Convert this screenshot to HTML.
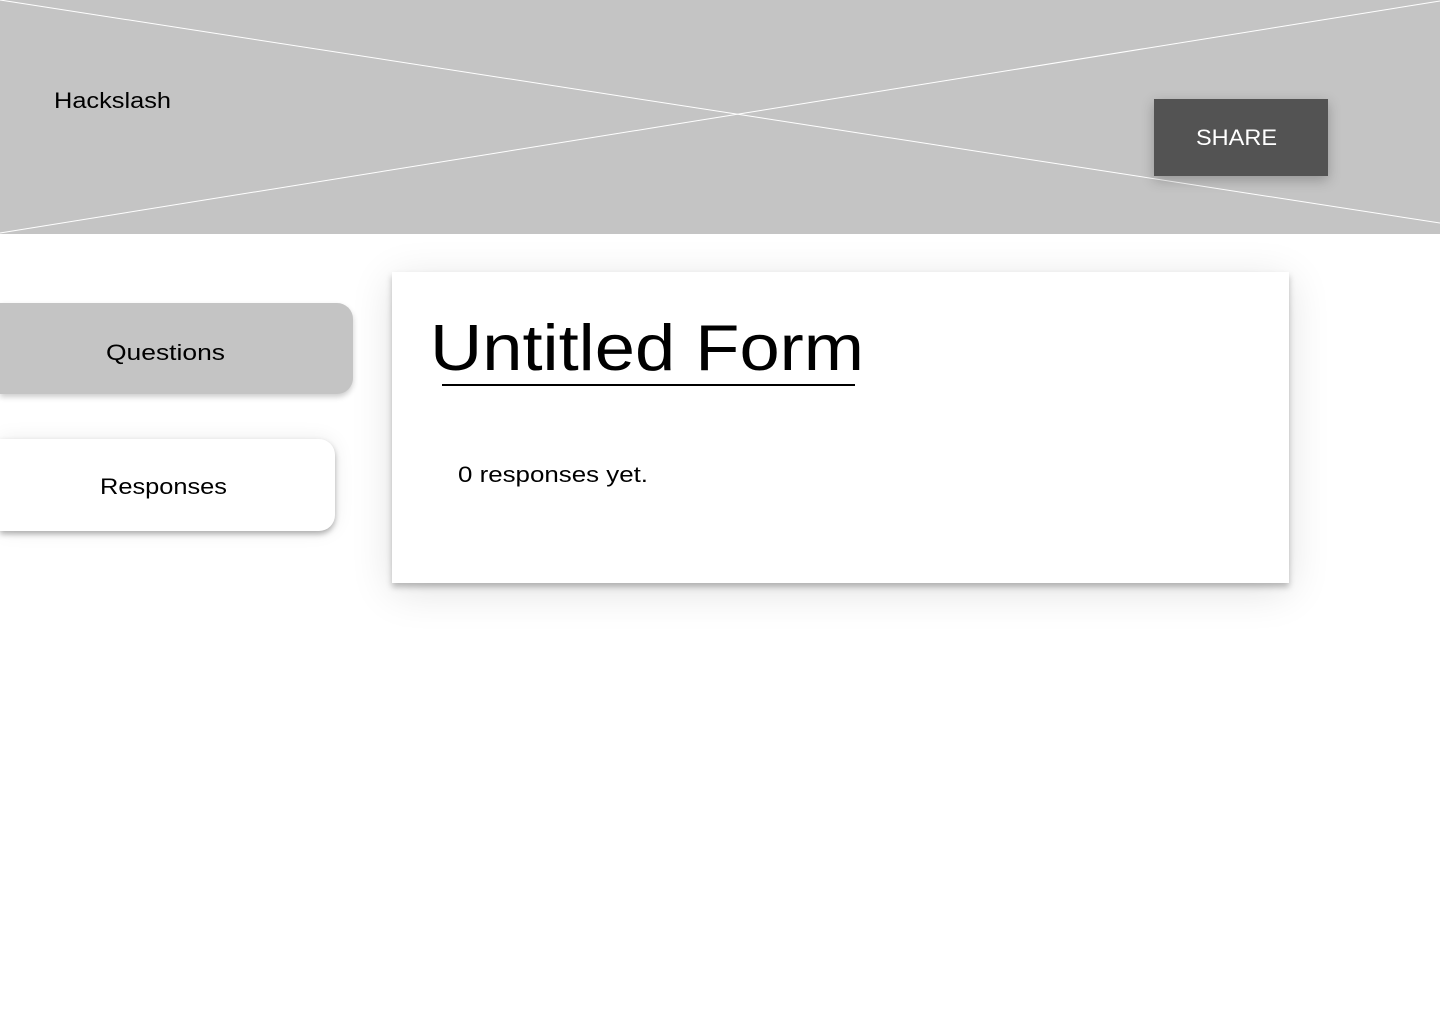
<!DOCTYPE html>
<html><head><meta charset="utf-8"><style>
html,body{margin:0;padding:0;width:1440px;height:1024px;background:#fff;overflow:hidden;font-family:"Liberation Sans",sans-serif}
.hdr{position:absolute;left:0;top:0;width:1440px;height:234px;background:#c4c4c4}
.share{position:absolute;left:1154px;top:99px;width:174px;height:77px;background:#535353;box-shadow:0 4px 12px rgba(0,0,0,.25)}
.q{position:absolute;left:0;top:303px;width:353px;height:91px;background:#c4c4c4;border-radius:0 16px 16px 0;box-shadow:0 3px 6px rgba(0,0,0,.2)}
.r{position:absolute;left:0;top:439px;width:335px;height:92px;background:#fff;border-radius:0 16px 16px 0;box-shadow:0 3px 6px rgba(0,0,0,.3),0 0 20px rgba(0,0,0,.08)}
.card{position:absolute;left:392px;top:272px;width:897px;height:311px;background:#fff;box-shadow:0 4px 6px rgba(0,0,0,.25),0 8px 40px rgba(0,0,0,.12)}
.ul{position:absolute;left:442px;top:384px;width:413px;height:1.5px;background:#000}
svg{position:absolute;left:0;top:0}
</style></head><body>
<div class="hdr"></div>
<svg width="1440" height="234"><line x1="0" y1="0" x2="1440" y2="223" stroke="#fff" stroke-width="1"/><line x1="0" y1="233" x2="1440" y2="1" stroke="#fff" stroke-width="1"/></svg>
<div class="share"></div>
<div class="q"></div>
<div class="r"></div>
<div class="card"></div>
<div class="ul"></div>
<svg width="1440" height="1024" font-family="Liberation Sans, sans-serif">
<text x="54" y="108" font-size="22" textLength="117" lengthAdjust="spacingAndGlyphs">Hackslash</text>
<text x="1196" y="145" font-size="22" fill="#fff" textLength="81" lengthAdjust="spacingAndGlyphs">SHARE</text>
<text x="106" y="360" font-size="22" textLength="119" lengthAdjust="spacingAndGlyphs">Questions</text>
<text x="100" y="494" font-size="22" textLength="127" lengthAdjust="spacingAndGlyphs">Responses</text>
<text x="430" y="370" font-size="65" textLength="434" lengthAdjust="spacingAndGlyphs">Untitled Form</text>
<text x="458" y="482" font-size="22" textLength="190" lengthAdjust="spacingAndGlyphs">0 responses yet.</text>
</svg>
</body></html>
